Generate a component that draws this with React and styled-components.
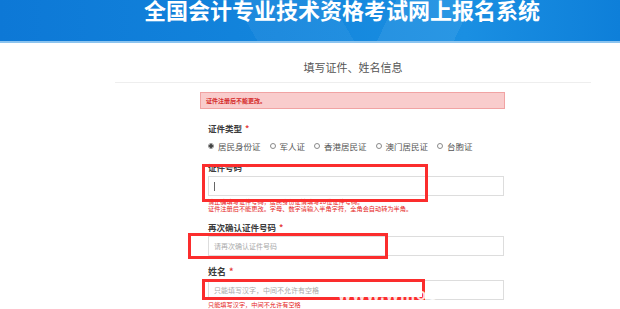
import React from "react";
import styled, { createGlobalStyle } from "styled-components";

const GlobalStyle = createGlobalStyle`
  html, body {
    margin: 0;
    padding: 0;
    background: #fff;
  }
  body {
    font-family: "Noto Sans CJK SC", "Noto Sans", sans-serif;
  }
`;

const TYPES = ["居民身份证", "军人证", "香港居民证", "澳门居民证", "台胞证"];

function App() {
  return (
    <Page>
      <GlobalStyle />
      <Header>
        <Column>
          <Title>全国会计专业技术资格考试网上报名系统</Title>
        </Column>
      </Header>
      <Column>
        <SubTitle>填写证件、姓名信息</SubTitle>
        <Divider />
        <Alert>证件注册后不能更改。</Alert>
        <Form>
          <Label>证件类型<Star>*</Star></Label>
          <RadioRow>
            {TYPES.map((t, i) => (
              <RadioItem key={t}>
                <Radio checked={i === 0} />
                {t}
              </RadioItem>
            ))}
          </RadioRow>

          <Label top={9}>证件号码<Star>*</Star></Label>
          <InputBox>
            <Caret />
          </InputBox>
          <ErrorText>
            <div>请正确填写证件号码，居民身份证请填写18位证件号码。</div>
            <div>证件注册后不能更改。字母、数字请输入半角字符，全角会自动转为半角。</div>
          </ErrorText>

          <Label top={9}>再次确认证件号码<Star>*</Star></Label>
          <InputBox>
            <Placeholder>请再次确认证件号码</Placeholder>
          </InputBox>

          <Label top={10} big>姓名<Star>*</Star></Label>
          <InputBox gap={2}>
            <Placeholder>只能填写汉字，中间不允许有空格</Placeholder>
          </InputBox>
          <ErrorText top={1}>
            <div>只能填写汉字，中间不允许有空格</div>
          </ErrorText>
        </Form>
      </Column>

      <Mark left={202} top={164} w={226} h={38} />
      <Mark left={188} top={233} w={200} h={26} />
      <Mark left={202} top={279} w={223} h={21} />
      <Watermark>www.wmoe</Watermark>
    </Page>
  );
}

const Page = styled.div`
  position: relative;
  width: 620px;
  height: 309px;
  overflow: hidden;
`;

const Header = styled.div`
  height: 41px;
  border-top: 1px solid #5aa9ea;
  border-bottom: 2px solid #8cc4ef;
  box-sizing: content-box;
  margin-top: -1px;
  overflow: hidden;
  background:
    linear-gradient(115deg, transparent 0 62%, rgba(255,255,255,0.07) 62% 74%, transparent 74%),
    linear-gradient(60deg, transparent 0 40%, rgba(255,255,255,0.05) 40% 55%, transparent 55%),
    linear-gradient(90deg, #0d78d6 0%, #1385dc 45%, #1a8fe2 75%, #0e7fd9 100%);
`;

const Column = styled.div`
  width: 476px;
  margin-left: 115px;
`;

const Title = styled.div`
  text-align: center;
  margin-left: -22px;
  color: #fff;
  font-size: 22px;
  line-height: 22px;
  font-weight: 700;
  white-space: nowrap;
  margin-top: -2px;
`;

const SubTitle = styled.div`
  margin-top: 17px;
  text-align: center;
  font-size: 11px;
  line-height: 14px;
  color: #555;
`;

const Divider = styled.div`
  margin-top: 8px;
  height: 1px;
  background: #eee;
`;

const Alert = styled.div`
  margin: 9px 0 0 85px;
  width: 305px;
  height: 17px;
  box-sizing: border-box;
  background: #f9cccc;
  border: 1px solid #f1a3a3;
  color: #d42a2a;
  font-size: 6px;
  line-height: 15px;
  padding-left: 5px;
  font-weight: 700;
`;

const Form = styled.div`
  margin-left: 93px;
  width: 296px;
  display: flex;
  flex-direction: column;
`;

const Label = styled.div`
  margin-top: ${(p) => (p.top ? p.top : 13)}px;
  font-size: ${(p) => (p.big ? 9 : 8.5)}px;
  line-height: 12px;
  font-weight: 700;
  color: #3c3c3c;
`;

const Star = styled.span`
  color: #e53a3a;
  margin-left: 3px;
`;

const RadioRow = styled.div`
  margin-top: 6px;
  display: flex;
  gap: 9px;
  font-size: 8.5px;
  line-height: 12px;
  color: #555;
  white-space: nowrap;
`;

const RadioItem = styled.div`
  display: flex;
  align-items: center;
  gap: 4px;
`;

const Radio = styled.span`
  width: 6px;
  height: 6px;
  border-radius: 50%;
  border: 1px solid #8a8a8a;
  box-sizing: border-box;
  background: ${(p) => (p.checked ? "radial-gradient(circle, #444 0 1.6px, #fff 1.8px)" : "#fff")};
`;

const InputBox = styled.div`
  margin-top: ${(p) => (p.gap ? p.gap : 3)}px;
  height: 20px;
  box-sizing: border-box;
  border: 1px solid #ddd;
  display: flex;
  align-items: center;
  padding-left: 5px;
`;

const Caret = styled.span`
  width: 1px;
  height: 9px;
  background: #666;
`;

const Placeholder = styled.span`
  font-size: 7px;
  color: #aaa;
  white-space: nowrap;
`;

const ErrorText = styled.div`
  margin-top: ${(p) => (p.top ? p.top : 2)}px;
  font-size: 6.2px;
  line-height: 7px;
  color: #e52323;
  white-space: nowrap;
`;

const Mark = styled.div`
  position: absolute;
  left: ${(p) => p.left}px;
  top: ${(p) => p.top}px;
  width: ${(p) => p.w}px;
  height: ${(p) => p.h}px;
  box-sizing: border-box;
  border: 3px solid #fb2d2d;
`;

const Watermark = styled.div`
  position: absolute;
  left: 338px;
  top: 285px;
  font-family: "Liberation Sans", sans-serif;
  font-size: 17px;
  font-weight: 700;
  color: rgba(255, 255, 255, 0.85);
  letter-spacing: 1px;
`;

export default App;
